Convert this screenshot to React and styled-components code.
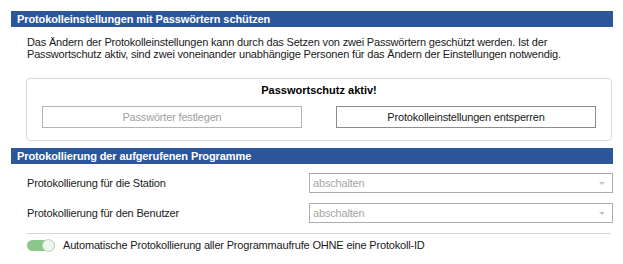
import React from "react";
import styled, { createGlobalStyle } from "styled-components";

const Global = createGlobalStyle`
  html, body { margin: 0; padding: 0; background: #ffffff; }
  body { font-family: "Liberation Sans", Arial, sans-serif; color: #1a1a1a; letter-spacing: -0.18px; }
  * { box-sizing: border-box; }
`;

const Page = styled.div`
  width: 623px;
  height: 264px;
  padding: 11px 10px 0 11px;
  overflow: hidden;
  background: #fff;
`;

const SectionHeader = styled.div`
  height: 16px;
  line-height: 16px;
  padding-left: 6px;
  background: #2b579a;
  color: #ffffff;
  font-weight: bold;
  font-size: 11px;
  letter-spacing: -0.1px;
  margin-top: ${(p) => p.$top || 0}px;
`;

const Description = styled.p`
  margin: 9px 0 0 0;
  padding-left: 16px;
  font-size: 11px;
  line-height: 12px;
  white-space: nowrap;
  color: #1a1a1a;
`;

const Box = styled.div`
  margin: 18px 1px 0 15px;
  border: 1px solid #d8d8d8;
  border-radius: 4px;
  padding: 3px 15px 12px 15px;
`;

const BoxTitle = styled.div`
  text-align: center;
  font-weight: bold;
  font-size: 11px;
  letter-spacing: 0;
  line-height: 16px;
  color: #000;
`;

const ButtonRow = styled.div`
  display: grid;
  grid-template-columns: 260px 260px;
  justify-content: space-between;
  margin-top: 8px;
`;

const Button = styled.button`
  height: 22px;
  background: #ffffff;
  border: 1px solid ${(p) => (p.disabled ? "#b4b4b4" : "#8c8c8c")};
  color: ${(p) => (p.disabled ? "#a0a0a0" : "#1a1a1a")};
  font-family: "Liberation Sans", Arial, sans-serif;
  font-size: 11px;
  letter-spacing: -0.18px;
  padding: 0;
  border-radius: 0;
`;

const Rows = styled.div`
  display: flex;
  flex-direction: column;
  gap: 10px;
  margin-top: 9px;
  padding-left: 16px;
`;

const Row = styled.div`
  display: grid;
  grid-template-columns: 282px 304px;
  align-items: center;
  height: 20px;
`;

const Label = styled.span`
  font-size: 11px;
  color: #1a1a1a;
`;

const Combo = styled.div`
  height: 20px;
  border: 1px solid #acacac;
  display: flex;
  align-items: center;
  justify-content: space-between;
  padding: 0 7px 0 3px;
  font-size: 11px;
  color: #a6a6a6;
  background: #fff;
`;

const Arrow = styled.span`
  width: 0;
  height: 0;
  border-left: 3px solid transparent;
  border-right: 3px solid transparent;
  border-top: 3px solid #c4c4c4;
`;

const Separator = styled.div`
  height: 1px;
  background: #d6d6d6;
  margin: 10px 2px 0 16px;
`;

const ToggleRow = styled.div`
  display: flex;
  align-items: center;
  gap: 8px;
  margin-top: 3px;
  padding-left: 16px;
`;

const Toggle = styled.span`
  position: relative;
  width: 28px;
  height: 11px;
  border-radius: 6px;
  background: #8cc68a;
  flex: none;
`;

const Knob = styled.span`
  position: absolute;
  right: 0;
  top: -1px;
  width: 13px;
  height: 13px;
  border-radius: 50%;
  background: #eef5ee;
  border: 1px solid #b9d9b8;
`;

const ToggleLabel = styled.span`
  font-size: 11px;
  line-height: 16px;
  color: #1a1a1a;
`;

export default function App() {
  return (
    <Page>
      <Global />
      <SectionHeader>Protokolleinstellungen mit Passwörtern schützen</SectionHeader>
      <Description>
        Das Ändern der Protokolleinstellungen kann durch das Setzen von zwei Passwörtern geschützt werden. Ist der
        <br />
        Passwortschutz aktiv, sind zwei voneinander unabhängige Personen für das Ändern der Einstellungen notwendig.
      </Description>
      <Box>
        <BoxTitle>Passwortschutz aktiv!</BoxTitle>
        <ButtonRow>
          <Button disabled>Passwörter festlegen</Button>
          <Button>Protokolleinstellungen entsperren</Button>
        </ButtonRow>
      </Box>
      <SectionHeader $top={7}>Protokollierung der aufgerufenen Programme</SectionHeader>
      <Rows>
        <Row>
          <Label>Protokollierung für die Station</Label>
          <Combo>
            abschalten
            <Arrow />
          </Combo>
        </Row>
        <Row>
          <Label>Protokollierung für den Benutzer</Label>
          <Combo>
            abschalten
            <Arrow />
          </Combo>
        </Row>
      </Rows>
      <Separator />
      <ToggleRow>
        <Toggle>
          <Knob />
        </Toggle>
        <ToggleLabel>Automatische Protokollierung aller Programmaufrufe OHNE eine Protokoll-ID</ToggleLabel>
      </ToggleRow>
    </Page>
  );
}
